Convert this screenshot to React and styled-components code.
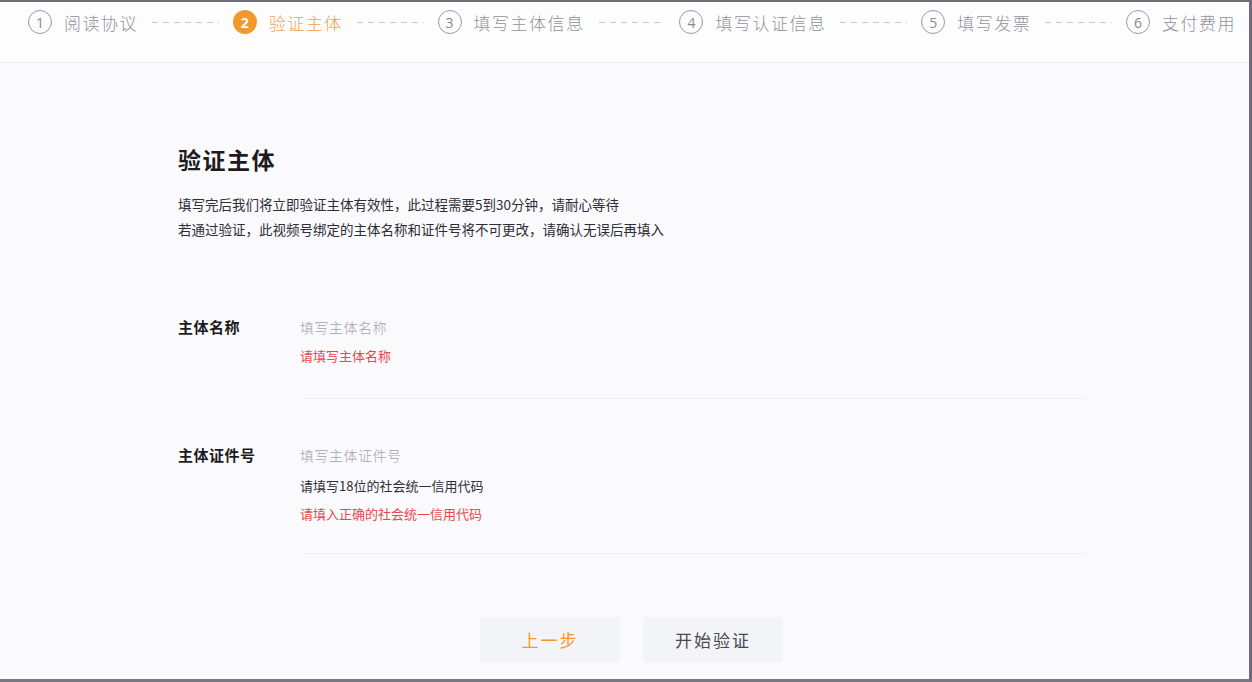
import React from 'react'
import styled, {createGlobalStyle} from 'styled-components'

const GlobalStyle = createGlobalStyle`
    html, body {
        margin: 0;
        padding: 0;
        background: #ffffff;
    }
    body {
        font-family: "Noto Sans CJK SC", "Noto Sans", sans-serif;
    }
`;

const StyledFrame = styled.div`
    box-sizing: border-box;
    width: 1252px;
    height: 682px;
    display: flex;
    flex-direction: column;
    border-top: 2px solid #6f6b78;
    border-right: 3px solid #6f6b78;
    border-bottom: 3px solid #7a7683;
    background: #fafafd;
    overflow: hidden;
`;

const StyledSteps = styled.div`
    display: flex;
    align-items: flex-start;
    height: 61px;
    flex-shrink: 0;
    padding: 8px 13px 0 28px;
    background: #fdfdfe;
    border-bottom: 1px solid #e6ecf0;
    box-sizing: border-box;
`;

const StyledStep = styled.div`
    display: flex;
    align-items: center;
    gap: 12px;
    height: 24px;
    flex-shrink: 0;
`;

const StyledCircle = styled.span`
    box-sizing: border-box;
    width: 24px;
    height: 24px;
    border-radius: 50%;
    display: flex;
    align-items: center;
    justify-content: center;
    font-family: "Open Sans", sans-serif;
    font-size: 14px;
    font-weight: ${props => props.active ? 700 : 400};
    color: ${props => props.active ? '#ffffff' : '#8a8890'};
    background: ${props => props.active ? '#f3982b' : 'transparent'};
    border: ${props => props.active ? 'none' : '1px solid #9a98a0'};
`;

const StyledStepLabel = styled.span`
    font-size: 17px;
    font-weight: 300;
    letter-spacing: 1.5px;
    color: ${props => props.active ? '#f3a14a' : '#94929a'};
`;

const StyledConnector = styled.span`
    flex: 1;
    height: 1px;
    margin: 12px 14px 0;
    background: repeating-linear-gradient(to right, #c9c8ce 0 6px, transparent 6px 11px);
`;

const StyledMain = styled.main`
    flex: 1;
    padding: 80px 0 0 178px;
    display: flex;
    flex-direction: column;
`;

const StyledTitle = styled.h1`
    margin: 0;
    font-size: 23px;
    font-weight: 700;
    letter-spacing: 1.5px;
    color: #1d1b22;
    line-height: 32px;
`;

const StyledIntro = styled.p`
    margin: 17px 0 0;
    font-size: 13.5px;
    line-height: 25px;
    color: #2f2d35;
`;

const StyledForm = styled.div`
    margin-top: 73px;
    display: flex;
    flex-direction: column;
    width: 907px;
`;

const StyledRow = styled.div`
    display: grid;
    grid-template-columns: 122px 1fr;
    margin-bottom: ${props => props.gap}px;
`;

const StyledLabel = styled.label`
    font-size: 15px;
    font-weight: 700;
    color: #1d1b22;
    line-height: 24px;
    letter-spacing: 0.5px;
`;

const StyledField = styled.div`
    display: flex;
    flex-direction: column;
    border-bottom: 1px solid #eceef2;
    padding-bottom: ${props => props.pad}px;
`;

const StyledInput = styled.input`
    border: none;
    outline: none;
    background: transparent;
    padding: 0;
    height: 24px;
    font-family: inherit;
    font-size: 14px;
    font-weight: 300;
    letter-spacing: 0.5px;
    color: #333;
    &::placeholder {
        color: #a5a3ab;
    }
`;

const StyledHint = styled.div`
    margin-top: ${props => props.top}px;
    font-size: 13px;
    line-height: 20px;
    color: ${props => props.error ? '#e9474c' : '#2f2d35'};
`;

const StyledActions = styled.div`
    display: flex;
    gap: 23px;
    margin: auto 0 17px 302px;
`;

const StyledButton = styled.button`
    width: 140px;
    height: 45px;
    border: none;
    border-radius: 3px;
    background: #f3f4f8;
    font-family: inherit;
    font-size: 17px;
    letter-spacing: 2px;
    color: ${props => props.primary ? '#f3982b' : '#4a4852'};
    cursor: pointer;
`;

const steps = ['阅读协议', '验证主体', '填写主体信息', '填写认证信息', '填写发票', '支付费用'];

function App() {
    const current = 1;

    return (
        <StyledFrame>
            <GlobalStyle />
            <StyledSteps>
                {steps.map((item, i) =>
                    <React.Fragment key={i}>
                        {i > 0 && <StyledConnector />}
                        <StyledStep>
                            <StyledCircle active={i === current}>{i + 1}</StyledCircle>
                            <StyledStepLabel active={i === current}>{item}</StyledStepLabel>
                        </StyledStep>
                    </React.Fragment>
                )}
            </StyledSteps>
            <StyledMain>
                <StyledTitle>验证主体</StyledTitle>
                <StyledIntro>
                    填写完后我们将立即验证主体有效性，此过程需要5到30分钟，请耐心等待<br />
                    若通过验证，此视频号绑定的主体名称和证件号将不可更改，请确认无误后再填入
                </StyledIntro>
                <StyledForm>
                    <StyledRow gap={44}>
                        <StyledLabel>主体名称</StyledLabel>
                        <StyledField pad={32}>
                            <StyledInput placeholder="填写主体名称" />
                            <StyledHint error top={7}>请填写主体名称</StyledHint>
                        </StyledField>
                    </StyledRow>
                    <StyledRow gap={0}>
                        <StyledLabel>主体证件号</StyledLabel>
                        <StyledField pad={29}>
                            <StyledInput placeholder="填写主体证件号" />
                            <StyledHint top={9}>请填写18位的社会统一信用代码</StyledHint>
                            <StyledHint error top={8}>请填入正确的社会统一信用代码</StyledHint>
                        </StyledField>
                    </StyledRow>
                </StyledForm>
                <StyledActions>
                    <StyledButton primary>上一步</StyledButton>
                    <StyledButton>开始验证</StyledButton>
                </StyledActions>
            </StyledMain>
        </StyledFrame>
    )
}

export default App;
